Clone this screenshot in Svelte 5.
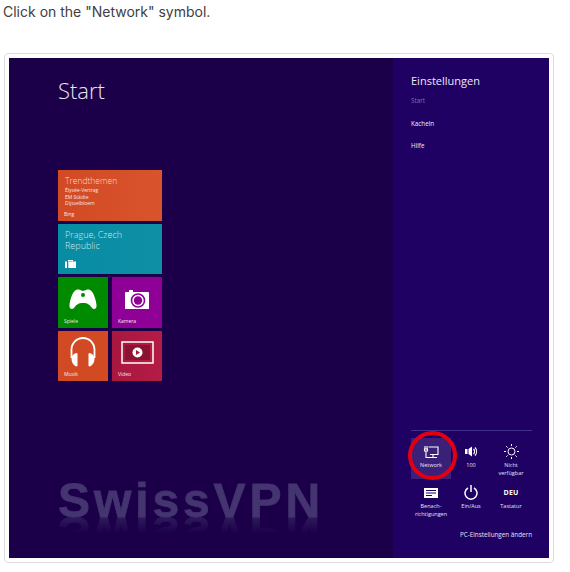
<script>
	const items = ['Start', 'Kacheln', 'Hilfe'];
</script>

<main class="page">
	<p class="prompt">Click on the "Network" symbol.</p>

	<div class="card">
		<div class="screen">
			<section class="start">
				<h1>Start</h1>

				<div class="tiles">
					<div class="tile wide news">
						<div class="news-title">Trendthemen</div>
						<div class="news-line">Élysée-Vertrag</div>
						<div class="news-line">EM Städte</div>
						<div class="news-line">Dijsselbloem</div>
						<span class="label">Bing</span>
					</div>
					<div class="tile wide travel">
						<div class="travel-title">Prague, Czech Republic</div>
						<svg class="case" viewBox="0 0 11 8" width="11" height="8">
							<path fill="#fff" d="M0 1.5h2V8H0zM3 1.5V0h5v1.5h3V8H8.4V1.5h-.9V1H3.6v.5h-.3V8h5V1.5z" />
						</svg>
					</div>
					<div class="tile games">
						<svg viewBox="0 0 28 21" width="28" height="21">
							<path fill="#fff" d="M7 1C9 0 11 1 14 2 17 1 19 0 21 1 24 2 27 10 27.500 16 28 20 25 21 23 19 21 16 19 14 14 14 9 14 7 16 5 19 3 21 0 20 .5 16 1 10 4 2 7 1z" />
							<circle cx="14" cy="6" r="2" fill="#008a00" />
						</svg>
						<span class="label">Spiele</span>
					</div>
					<div class="tile camera">
						<svg viewBox="0 0 26 21" width="26" height="21">
							<path fill="#fff" d="M2 3h3V1h4v2h15a1 1 0 0 1 1 1v16H1V4a1 1 0 0 1 1-1z" />
							<circle cx="14" cy="11.500" r="6.500" fill="none" stroke="#8f0096" stroke-width="1.600" />
							<circle cx="14" cy="11.500" r="4.200" fill="#8f0096" />
						</svg>
						<span class="label">Kamera</span>
					</div>
					<div class="tile music">
						<svg viewBox="0 0 26 30" width="26" height="30">
							<path fill="none" stroke="#fff" stroke-width="1.800" d="M1.500 21v-8.500a11.500 11.500 0 0 1 23 0v8.500" />
							<path fill="#fff" d="M6 16c-3 1-4.500 3-4.500 6s1.500 6 4.500 7.500l1.500-.5V16.500zM20 16c3 1 4.500 3 4.500 6s-1.500 6-4.500 7.500l-1.500-.5V16.500z" />
						</svg>
						<span class="label">Musik</span>
					</div>
					<div class="tile video">
						<svg viewBox="0 0 33 23" width="33" height="23">
							<rect x="1" y="1" width="31" height="21" fill="none" stroke="#fff" stroke-width="1.500" />
							<rect x="4" y="4" width="25" height="15" fill="#8c1230" />
							<circle cx="16.500" cy="11.500" r="5" fill="#fff" />
							<path fill="#a8173f" d="M15 9l4 2.500-4 2.500z" />
						</svg>
						<span class="label">Video</span>
					</div>
				</div>

				<div class="brand">SwissVPN</div>
			</section>

			<aside class="panel">
				<h2>Einstellungen</h2>
				<ul class="menu">
					{#each items as item, i}
						<li class:dim={i === 0}>{item}</li>
					{/each}
				</ul>

				<div class="quick">
					<div class="cell top active">
						<svg viewBox="0 0 16 15" width="16" height="15" fill="none" stroke="#fff" stroke-width="1.100">
							<path d="M2 2v3M4 2v3M1.500 5h3v2h-3zM3 7v6.500h11M5.500 3h9.500v7.500H7M10 10.500v3" />
						</svg>
						<span>Network</span>
					</div>
					<div class="cell top">
						<svg viewBox="0 0 14 15" width="14" height="15">
							<path fill="#fff" d="M1 5h2.500v5H1zM4.500 5L8 2.500V12.500L4.500 10z" />
							<path fill="none" stroke="#fff" stroke-width="1.200" d="M9.500 5a3.500 3.500 0 0 1 0 5M11 3.500a6 6 0 0 1 0 8" />
						</svg>
						<span>100</span>
					</div>
					<div class="cell top">
						<svg viewBox="0 0 15 15" width="15" height="15" fill="none" stroke="#fff" stroke-width="1">
							<circle cx="7.500" cy="7.500" r="3.500" />
							<path d="M7.500 0v2M7.500 13v2M0 7.500h2M13 7.500h2M2.200 2.200l1.400 1.400M11.400 11.400l1.400 1.400M2.200 12.800l1.400-1.400M11.400 3.600l1.400-1.400" />
						</svg>
						<span>Nicht<br />verfügbar</span>
					</div>
					<div class="cell">
						<svg viewBox="0 0 14 15" width="14" height="15">
							<path fill="#fff" d="M0 3h14v10H0z" />
							<path fill="none" stroke="#1f0063" stroke-width="1" d="M2 5.500h10M2 8h10M2 10.500h6" />
						</svg>
						<span>Benach-<br />richtigungen</span>
					</div>
					<div class="cell">
						<svg viewBox="0 0 14 15" width="14" height="15" fill="none" stroke="#fff" stroke-width="1.500">
							<path d="M4 3a6 6 0 1 0 6 0M7 0v7" />
						</svg>
						<span>Ein/Aus</span>
					</div>
					<div class="cell">
						<b class="deu">DEU</b>
						<span>Tastatur</span>
					</div>
				</div>

				<div class="pc">PC-Einstellungen ändern</div>

				<div class="ring"></div>
			</aside>
		</div>
	</div>
</main>

<style>
	:global(body) {
		margin: 0;
		background: #fff;
	}

	.page {
		width: 570px;
		height: 572px;
		overflow: hidden;
		font-family: 'Open Sans', sans-serif;
	}

	.prompt {
		margin: 0;
		padding: 3px 0 0 3px;
		height: 53px;
		box-sizing: border-box;
		font-family: Inter, sans-serif;
		font-size: 14px;
		line-height: 18px;
		color: #404040;
	}

	.card {
		width: 550px;
		height: 510px;
		margin-left: 4px;
		box-sizing: border-box;
		padding: 4px;
		border: 1px solid #dcdcdc;
		border-radius: 4px;
	}

	.screen {
		display: flex;
		width: 540px;
		height: 500px;
		color: #fff;
	}

	.start {
		width: 384px;
		background: #1b0049;
		padding: 20px 0 0 49px;
		box-sizing: border-box;
	}

	h1 {
		margin: 0;
		font-weight: 300;
		font-size: 22px;
		line-height: 25px;
		height: 92px;
		color: #e8e4f2;
	}

	.tiles {
		display: grid;
		grid-template-columns: 50px 50px;
		grid-template-rows: 51px 50px 51px 50px;
		column-gap: 4px;
		row-gap: 3px;
	}

	.tile {
		position: relative;
		display: flex;
		align-items: center;
		justify-content: center;
		padding-bottom: 7px;
		box-sizing: border-box;
	}

	.wide {
		grid-column: span 2;
		display: block;
		padding: 6px 7px;
	}

	.label {
		position: absolute;
		left: 6px;
		bottom: 3px;
		font-size: 5px;
		line-height: 7px;
		color: #f4e8e8;
	}

	.news {
		background: linear-gradient(90deg, #d14a24, #d9532c);
	}

	.news-title {
		font-size: 8.500px;
		line-height: 10px;
		font-weight: 300;
		margin-bottom: 1px;
		color: #f6dcd2;
	}

	.news-line {
		font-size: 5px;
		line-height: 6.500px;
		color: #f6e6e0;
	}

	.travel {
		background: linear-gradient(90deg, #078ca4, #0f8fa6);
		padding-top: 5px;
	}

	.travel-title {
		font-size: 9px;
		line-height: 11px;
		font-weight: 300;
		width: 70px;
		color: #cfe9ee;
	}

	.case {
		position: absolute;
		left: 7px;
		bottom: 6px;
	}

	.games {
		background: #008a00;
	}

	.camera {
		background: #8f0096;
	}

	.music {
		background: #d14a24;
		padding-bottom: 8px;
	}

	.video {
		background: linear-gradient(90deg, #a8173f, #b41c45);
	}

	.brand {
		margin-top: 103px;
		width: 270px;
		font-family: 'Liberation Sans', Arial, sans-serif;
		font-weight: 700;
		font-size: 48px;
		line-height: 33px;
		letter-spacing: 3.900px;
		color: #443470;
		-webkit-text-stroke: 0.8px #443470;
		white-space: nowrap;
		-webkit-box-reflect: below 0 linear-gradient(transparent 50%, rgba(255, 255, 255, 0.5));
	}

	.panel {
		position: relative;
		flex: 1;
		background: #1f0063;
		padding: 15px 17px 0 18px;
		box-sizing: border-box;
		display: flex;
		flex-direction: column;
	}

	h2 {
		margin: 0;
		font-weight: 400;
		font-size: 11px;
		line-height: 16px;
		color: #ece9f6;
	}

	.menu {
		list-style: none;
		margin: 8px 0 0;
		padding: 0;
		flex: 1;
		font-size: 6.300px;
		line-height: 8.500px;
	}

	.menu li {
		height: 22.500px;
		color: #f0eef8;
	}

	.menu .dim {
		color: #7d70ad;
	}

	.quick {
		display: grid;
		grid-template-columns: repeat(3, 40px);
		grid-template-rows: 50px 49px;
		border-top: 1px solid #42308a;
		width: 121px;
	}

	.cell {
		display: flex;
		flex-direction: column;
		align-items: center;
		padding-top: 4px;
		font-size: 5.500px;
		line-height: 8px;
		text-align: center;
		color: #e6e3f2;
	}

	.cell.top {
		padding-top: 13px;
	}

	.cell svg,
	.deu {
		height: 15px;
		margin-bottom: 2px;
		flex: none;
	}

	.cell.active {
		background: #3a2079;
		height: 41px;
		padding-top: 6px;
		margin-top: 7px;
		box-sizing: border-box;
	}

	.deu {
		font-size: 7px;
		line-height: 15px;
		color: #fff;
		letter-spacing: 0.2px;
	}

	.pc {
		height: 28px;
		font-size: 6.300px;
		line-height: 9px;
		text-align: right;
		color: #e6e3f2;
	}

	.ring {
		position: absolute;
		left: 15px;
		bottom: 78px;
		width: 41px;
		height: 41px;
		border: 4px solid #e00012;
		border-radius: 50%;
	}
</style>
